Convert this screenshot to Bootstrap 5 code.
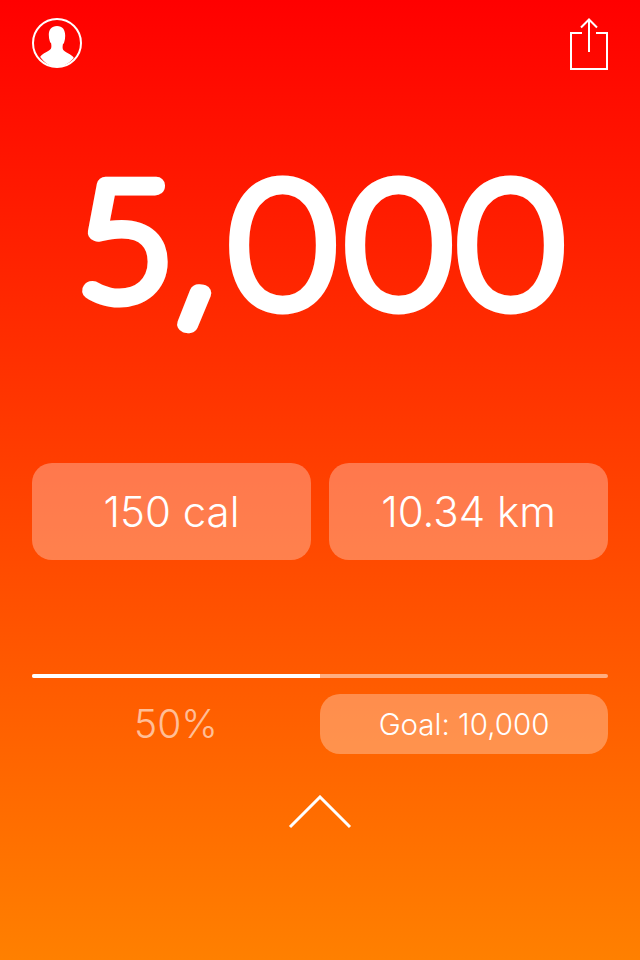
<!DOCTYPE html>
<html lang="en">
<head>
  <meta charset="UTF-8" />
  <title>Steps</title>
  <meta name="viewport" content="width=device-width, initial-scale=1.0"/>
  <link rel="stylesheet" href="https://cdn.jsdelivr.net/npm/bootstrap@5.3.3/dist/css/bootstrap.min.css"/>
  <style>
    body {
      width: 640px;
      height: 960px;
      overflow: hidden;
      background: linear-gradient(180deg, #ff0000 0%, #ff8000 100%);
      color: #fff;
      font-family: "Inter", "Liberation Sans", sans-serif;
      font-weight: 300;
    }

    .top-icons { height: 72px; padding: 18px 32px 0 32px; }
    .top-icons button { background: none; border: 0; padding: 0; line-height: 0; }

    .step-count { margin-top: 42px; height: 230px; line-height: 0; }
    .step-count svg { overflow: visible; }
    .step-count text {
      font-family: "Lato", "Liberation Sans", sans-serif;
      font-weight: 100;
      font-size: 171px;
      fill: #fff;
      stroke: #fff;
      stroke-width: 17px;
      stroke-linejoin: round;
      stroke-linecap: round;
    }
    .step-count .first-digit { font-size: 160px; }
    .step-count .comma-mark { font-family: "Inter", "Liberation Sans", sans-serif; font-size: 150px; }

    .stat-row { margin-top: 119px; padding: 0 32px; gap: 18px; }
    .stat-tile {
      flex: 1 1 0;
      height: 97px;
      border-radius: 20px;
      background: rgba(255, 255, 255, .3);
      font-size: 42px;
    }

    .goal-bar {
      margin: 114px 32px 0 32px;
      height: 4px;
      border-radius: 2px;
      background: rgba(255, 255, 255, .5);
    }
    .goal-bar .progress-bar { background: #fff; }

    .goal-row { margin-top: 16px; padding: 0 32px; }
    .goal-pct { width: 288px; font-size: 39px; color: rgba(255, 255, 255, .6); height: 60px; }
    .goal-pill {
      width: 288px;
      height: 60px;
      border-radius: 20px;
      background: rgba(255, 255, 255, .3);
      font-size: 29.5px;
    }

    .chevron-up { margin-top: 41px; line-height: 0; }
  </style>
</head>
<body>

  <!-- top icons -->
  <div class="top-icons d-flex justify-content-between align-items-start">
    <button type="button" aria-label="Profile">
      <svg width="50" height="50" viewBox="0 0 50 50">
        <circle cx="25" cy="25" r="24" fill="none" stroke="#fff" stroke-width="2"/>
        <path fill="#fff" d="M25 8c-5.500 0-8.200 3.600-8.200 8.800 0 2.400.4 4.600 1 6.500.3 1 .7 1.500 1.300 2 .5 2.800.4 4.600-.4 5.800-1 1.500-6 3.600-9.200 6.200-.6.500-1 1-1.300 1.800C12.500 45 18.400 49 25 49s12.500-4 16.800-8.900c-.3-.8-.7-1.300-1.300-1.800-3.200-2.600-8.200-4.700-9.200-6.200-.8-1.200-.9-3-.4-5.800.6-.5 1-1 1.300-2 .6-1.900 1-4.100 1-6.500C33.200 11.600 30.500 8 25 8z"/>
      </svg>
    </button>
    <button type="button" aria-label="Share">
      <svg width="38" height="54" viewBox="0 0 38 54">
        <path fill="none" stroke="#fff" stroke-width="2" d="M12 15H1v36h36V15H26"/>
        <path fill="none" stroke="#fff" stroke-width="2" d="M19 34V2M11 9.500l8-8 8 8"/>
      </svg>
    </button>
  </div>

  <!-- big count, glyphs placed one by one for the hand drawn spacing -->
  <div class="step-count">
    <svg width="640" height="230" viewBox="0 0 640 230">
      <text transform="scale(1.05 1)"><tspan class="first-digit" x="73.200" y="184">5</tspan><tspan class="comma-mark" x="168" y="187" rotate="8">,</tspan><tspan x="219.600 330.100 436.700" y="191.500">000</tspan></text>
    </svg>
  </div>

  <div class="stat-row d-flex">
    <div class="stat-tile d-flex align-items-center justify-content-center">150 cal</div>
    <div class="stat-tile d-flex align-items-center justify-content-center">10.34 km</div>
  </div>

  <div class="goal-bar progress">
    <div class="progress-bar" style="width: 50%"></div>
  </div>

  <div class="goal-row d-flex">
    <div class="goal-pct d-flex align-items-center justify-content-center">50%</div>
    <div class="goal-pill d-flex align-items-center justify-content-center">Goal: 10,000</div>
  </div>

  <div class="chevron-up text-center">
    <svg width="64" height="34" viewBox="0 0 64 34">
      <path fill="none" stroke="#fff" stroke-width="3" d="M2 32 32 2l30 30"/>
    </svg>
  </div>

</body>
</html>
